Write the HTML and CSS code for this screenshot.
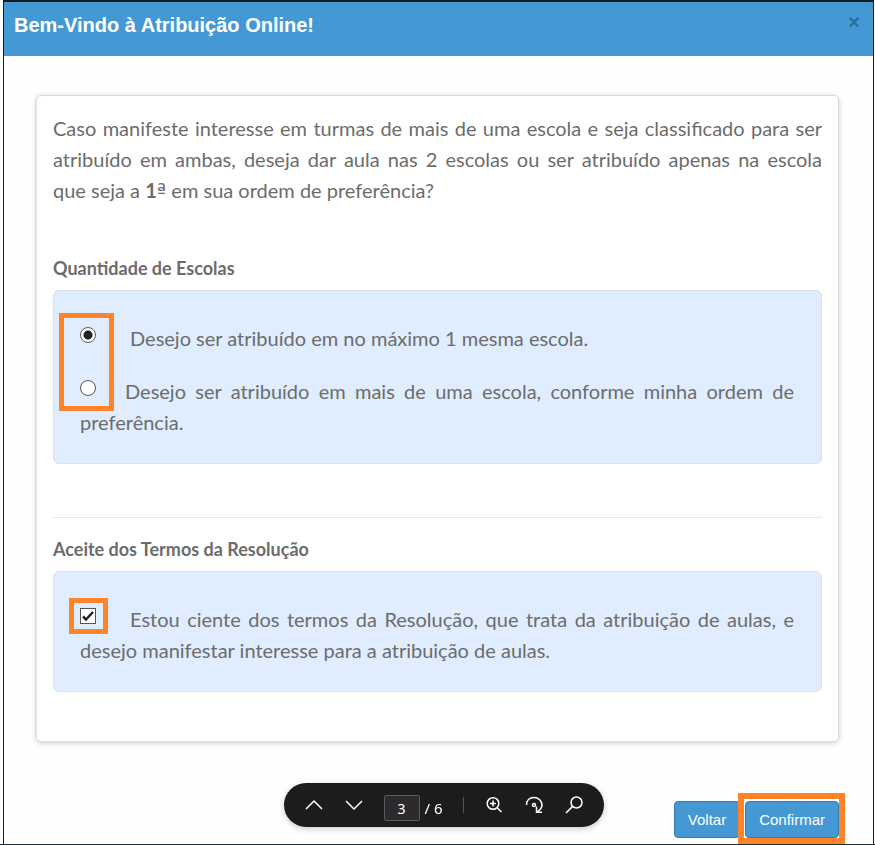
FILE: index.html
```html
<!DOCTYPE html>
<html lang="pt-BR">
<head>
<meta charset="utf-8">
<meta name="viewport" content="width=device-width, initial-scale=1">
<title>Atribuição Online</title>
<link rel="stylesheet" href="styles.css">
</head>
<body>
<main class="modal">
  <header class="modal-header">
    <h1>Bem-Vindo à Atribuição Online!</h1>
    <button class="close" type="button" aria-label="Fechar">×</button>
  </header>
  <form class="modal-body">
    <div class="card">
      <p class="intro">Caso manifeste interesse em turmas de mais de uma escola e seja classificado para ser atribuído em ambas, deseja dar aula nas 2 escolas ou ser atribuído apenas na escola que&nbsp;seja a <b>1<span class="ordinal">ª</span></b> em sua ordem de preferência?</p>
      <h2>Quantidade de Escolas</h2>
      <div class="panel">
        <p class="option"><input type="radio" id="uma" name="escolas" checked><label for="uma">Desejo ser atribuído em no máximo 1 mesma escola.</label></p>
        <p class="option option-close"><input type="radio" id="mais" name="escolas"><label for="mais">Desejo ser atribuído em mais de uma escola, conforme minha ordem de preferência.</label></p>
        <span class="mark mark-radios"></span>
      </div>
      <hr>
      <h2>Aceite dos Termos da Resolução</h2>
      <div class="panel">
        <p class="option"><input type="checkbox" id="termos" checked><label for="termos">Estou ciente dos termos da Resolução, que trata da atribuição de aulas, e desejo manifestar interesse para a atribuição de aulas.</label></p>
        <span class="mark mark-check"></span>
      </div>
    </div>
    <footer class="actions">
      <button class="btn" type="button">Voltar</button>
      <span class="confirm"><button class="btn" type="button">Confirmar</button><span class="mark mark-confirm"></span></span>
    </footer>
  </form>
</main>
<nav class="viewer" aria-label="Páginas">
  <button type="button" aria-label="Página anterior"><svg width="20" height="20" viewBox="0 0 20 20"><path d="M2 14 10 6 18 14"/></svg></button>
  <button type="button" aria-label="Próxima página"><svg width="20" height="20" viewBox="0 0 20 20"><path d="M2 6 10 14 18 6"/></svg></button>
  <span class="pages"><input type="text" value="3" aria-label="Página"><span>/ 6</span></span>
  <span class="divider"></span>
  <button type="button" aria-label="Ampliar"><svg width="20" height="20" viewBox="0 0 20 20"><circle cx="9" cy="8.500" r="5.800"/><path d="M13.200 12.700 17.500 17M6 8.500h6M9 5.500v6"/></svg></button>
  <button type="button" aria-label="Girar"><svg width="20" height="20" viewBox="0 0 20 20"><path d="M2.500 10C2.500 5.500 5.500 2.500 10 2.500S18 5.800 18 10c0 3-2 5-5 7M12.500 11.500v5.800h5.500"/><circle cx="10" cy="10" r="1.500"/></svg></button>
  <button type="button" aria-label="Pesquisar"><svg width="20" height="20" viewBox="0 0 20 20"><circle cx="12.500" cy="7.500" r="5.500"/><path d="M8.600 11.400 2 18"/></svg></button>
</nav>
</body>
</html>
```
FILE: styles.css
```css
* { box-sizing: border-box; }

body {
  margin: 0;
  background: #fefefe;
  color: #6c6c6c;
  font-family: Lato, "Liberation Sans", sans-serif;
  border-bottom: 1px solid #1b2c3b;
}

.modal {
  margin: 0 1px 0 3px;
  border: 1px solid #161b20;
  border-top-width: 2px;
  border-bottom: 0;
}

.modal-header {
  display: flex;
  justify-content: space-between;
  align-items: flex-start;
  height: 54px;
  padding: 9px 10px;
  background: #4499d5;
}

h1 {
  margin: 2px 0 0;
  color: #fff;
  font: bold 20px/24px "Liberation Sans", sans-serif;
}

.close {
  padding: 0 3px;
  border: 0;
  background: none;
  color: #2d6d9c;
  font: bold 20px/22px "Liberation Sans", sans-serif;
}

.modal-body { padding: 39px 34px 6px 32px; }

.card {
  padding: 17px 16px 49px;
  border: 1px solid #ddd;
  border-radius: 5px;
  background: #fff;
  box-shadow: 0 1px 5px rgba(0, 0, 0, .2);
}

.intro, .option {
  margin: 0;
  font-size: 20px;
  line-height: 31px;
  text-align: justify;
}

.ordinal { font-family: "DejaVu Sans", sans-serif; font-weight: normal; line-height: 20px; }

h2 {
  margin: 0 0 10px;
  font-size: 18px;
  line-height: 24px;
}

.intro + h2 { margin-top: 50px; }

.panel {
  position: relative;
  padding: 32px 27px 25px 26px;
  border: 1px solid #d8e1ec;
  border-radius: 6px;
  background: #e0edff;
}

.option + .option { margin-top: 22px; }

.option input {
  appearance: none;
  width: 16px;
  height: 16px;
  margin: 0 34px 0 0;
  border: 1px solid #555;
  background: #fff;
  vertical-align: 3px;
}

.option-close input { margin-right: 29px; }

.option input[type="radio"] { border-radius: 50%; }

.option input[type="radio"]:checked {
  background: radial-gradient(circle, #222 0 4px, #fff 5px);
}

.option input[type="checkbox"] {
  background: #fff url("data:image/svg+xml,%3Csvg xmlns='http://www.w3.org/2000/svg' viewBox='0 0 14 14'%3E%3Cpath d='M2 7.500 5 10.500 12 3' fill='none' stroke='%23222' stroke-width='2.500'/%3E%3C/svg%3E");
}

hr {
  margin: 53px 0 19px;
  border: 0;
  border-top: 1px solid #e8e8e8;
}

.mark {
  position: absolute;
  border: 5px solid #ff8429;
  pointer-events: none;
}

.mark-radios { left: 5px; top: 22px; width: 55px; height: 98px; }
.mark-check { left: 15px; top: 26px; width: 39px; height: 36px; }
.mark-confirm { inset: -8px -6px -6px -7px; border-width: 6px; }

.actions {
  display: flex;
  justify-content: flex-end;
  gap: 5px;
  margin-top: 59px;
}

.confirm { position: relative; }

.btn {
  height: 37px;
  padding: 0 13px;
  border: 1px solid #2f7eb8;
  border-radius: 4px;
  background: #4499d5;
  color: #fff;
  font: 15px/24px "Liberation Sans", sans-serif;
}

.viewer {
  position: fixed;
  bottom: 18px;
  left: 50%;
  display: flex;
  align-items: center;
  width: 320px;
  height: 44px;
  margin-left: -154px;
  padding: 0 10px;
  border-radius: 22px;
  background: #1c1c1b;
  box-shadow: 0 2px 6px rgba(0, 0, 0, .2);
  color: #fff;
}

.viewer button {
  display: grid;
  place-items: center;
  width: 40px;
  height: 40px;
  padding: 0;
  border: 0;
  background: none;
}

.viewer svg {
  fill: none;
  stroke: #fff;
  stroke-width: 1.5;
}

.pages {
  display: flex;
  align-items: center;
  gap: 5px;
  margin: 6px 0 0 10px;
  font: 15px/20px "Noto Sans", sans-serif;
}

.pages input {
  width: 36px;
  height: 26px;
  padding: 0;
  border: 1px solid #5b5b5b;
  border-radius: 2px;
  background: #2b2b2d;
  color: #fff;
  font: 14px/20px "Noto Sans", sans-serif;
  text-align: center;
}

.divider {
  width: 1px;
  height: 16px;
  margin: 0 10px 0 auto;
  background: #555;
}
```
